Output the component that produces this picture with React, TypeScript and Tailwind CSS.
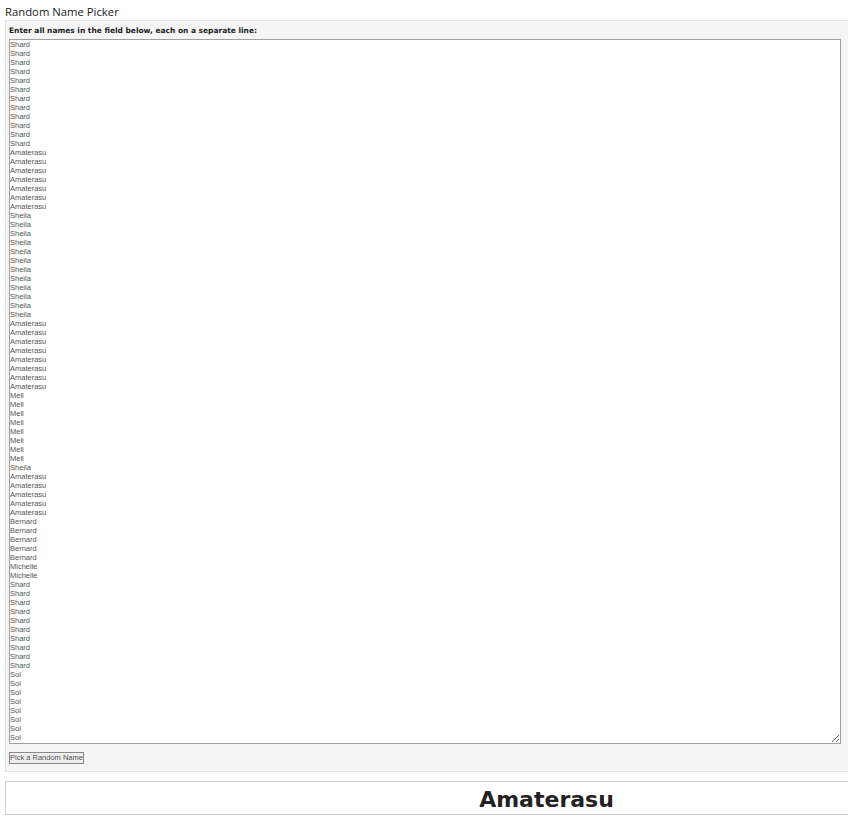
const groups: [string, number][] = [
  ["Shard", 12],
  ["Amaterasu", 7],
  ["Sheila", 12],
  ["Amaterasu", 8],
  ["Mell", 8],
  ["Sheila", 1],
  ["Amaterasu", 5],
  ["Bernard", 5],
  ["Michelle", 2],
  ["Shard", 10],
  ["Sol", 8],
];
const names = groups.flatMap(([n, c]) => Array.from({ length: c }, () => n)).join("\n");

export default function App() {
  return (
    <div className="w-[848px] h-[821px] overflow-hidden bg-white pl-[5px] font-['Liberation_Sans',sans-serif]">
      <div className="h-[20px] pt-[4px] text-[11.3px] leading-[16px] text-[#222] font-['Open_Sans',sans-serif]">Random Name Picker</div>
      <div className="w-[1082px] h-[752px] border border-[#e3e3e3] bg-[#f5f5f5] pt-[4px] pl-[3px]">
        <div className="h-[14px] text-[7.47px] leading-[11px] font-bold text-[#222] font-['DejaVu_Sans',sans-serif]">Enter all names in the field below, each on a separate line:</div>
        <textarea
          readOnly
          defaultValue={names}
          className="block w-[832px] h-[705px] border border-[#a0a0a0] bg-white pl-0 pt-0 text-[7.5px] leading-[9px] text-[#555] font-['Liberation_Sans',sans-serif] overflow-hidden resize"
        />
        <button className="block mt-[8px] w-[75px] h-[12px] border border-[#8a8a8a] bg-[#efefef] text-[7.5px] leading-[10px] text-[#555] font-['Liberation_Sans',sans-serif] text-center whitespace-nowrap">Pick a Random Name</button>
      </div>
      <div className="mt-[9px] w-[1083px] h-[34px] border border-[#ccc] bg-white text-center text-[22px] leading-[35px] font-bold text-[#222] font-['DejaVu_Sans',sans-serif]">Amaterasu</div>
    </div>
  );
}
